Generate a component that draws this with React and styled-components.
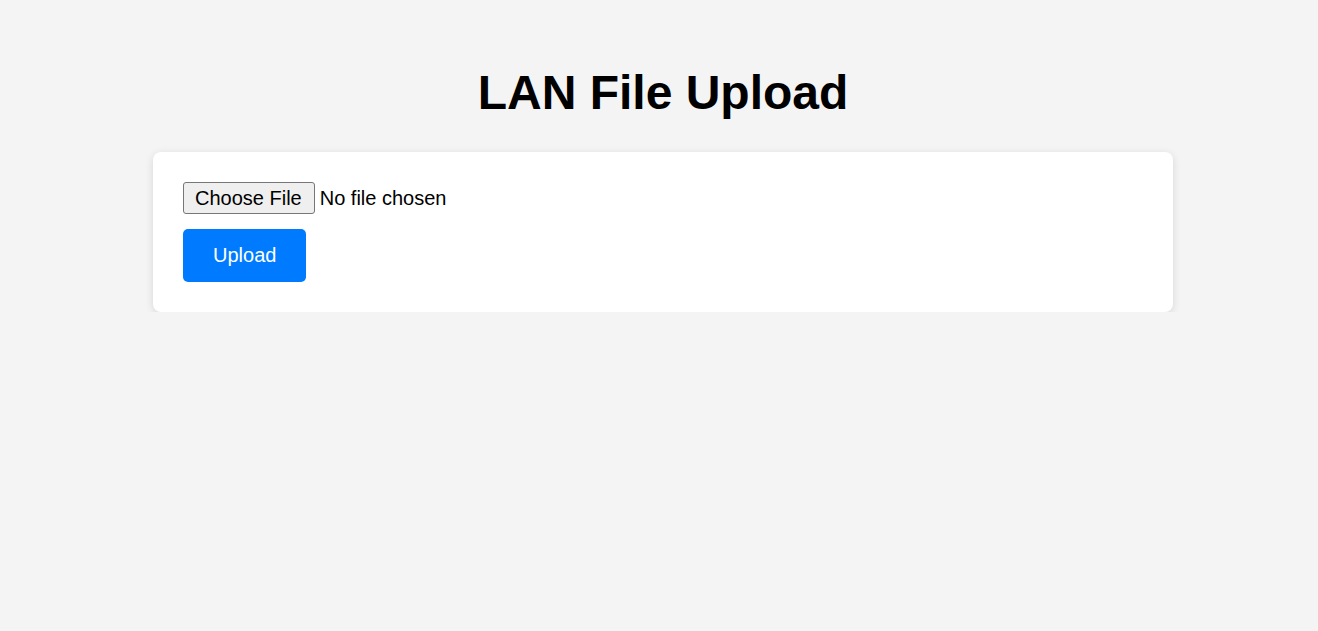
import React from "react";
import styled, { createGlobalStyle } from "styled-components";

const GlobalStyle = createGlobalStyle`
  body {
    margin: 0;
    padding: 0 0 0 8px;
    background: #f4f4f4;
    font-family: "Liberation Sans", Arial, sans-serif;
    color: #000;
  }
`;

const Page = styled.div`
  padding-top: 32px;
  display: flex;
  flex-direction: column;
  align-items: center;
`;

const Title = styled.h1`
  font-size: 48px;
  font-weight: bold;
  line-height: normal;
  margin: 33px 0 32px;
  text-align: center;
`;

const Card = styled.form`
  width: 1020px;
  box-sizing: border-box;
  background: #fff;
  border-radius: 8px;
  padding: 30px;
  box-shadow: 0 2px 8px rgba(0, 0, 0, 0.12);
  display: flex;
  flex-direction: column;
  align-items: flex-start;
  gap: 15px;
`;

const FileInput = styled.input`
  font-family: inherit;
  font-size: 20px;
  color: #000;

  &::file-selector-button {
    font-family: inherit;
    font-size: 20px;
    color: #000;
    background: #efefef;
    border: 1px solid #767676;
    border-radius: 3px;
    padding: 4px 12px 3px 11px;
    margin-right: 5px;
    cursor: pointer;
  }
`;

const UploadButton = styled.button`
  font-family: inherit;
  font-size: 20px;
  line-height: 23px;
  color: #fff;
  background: #007bff;
  border: none;
  border-radius: 5px;
  padding: 15px 30px;
  cursor: pointer;

  &:hover {
    background: #0069d9;
  }
`;

const App = () => {
  return (
    <>
      <GlobalStyle />
      <Page>
        <Title>LAN File Upload</Title>
        <Card onSubmit={(e) => e.preventDefault()}>
          <FileInput type="file" name="file" />
          <UploadButton type="submit">Upload</UploadButton>
        </Card>
      </Page>
    </>
  );
};

export default App;
